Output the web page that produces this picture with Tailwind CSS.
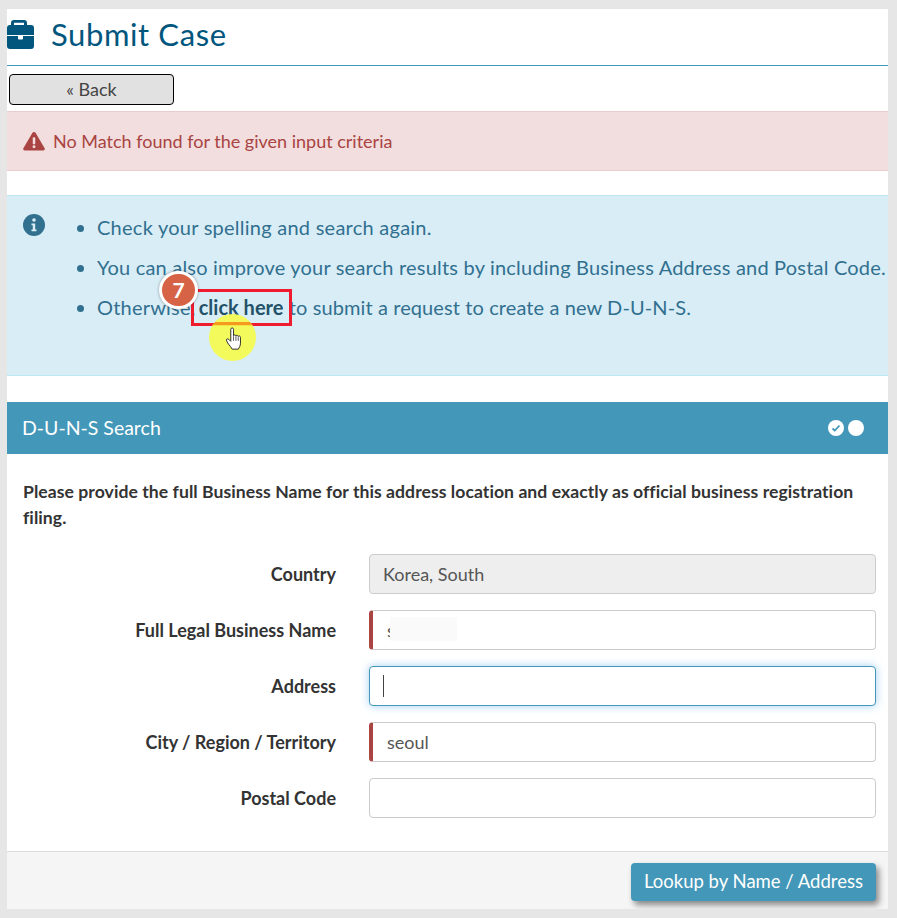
<!DOCTYPE html>
<html lang="en">
<head>
  <meta charset="UTF-8" />
  <title>Submit Case</title>
  <script src="https://cdn.jsdelivr.net/npm/@tailwindcss/browser@4"></script>
</head>
<body class="bg-[#e6e6e6] font-['Lato','Open_Sans',sans-serif] text-[#333]">
  <div class="relative ml-[7px] mr-[9px] mt-[9px] h-[900px] bg-white overflow-hidden">

    <!-- header -->
    <div class="flex items-center h-[57px] border-b border-[#4397b8]">
      <svg class="w-[27px] h-[29px] -mt-[6px]" viewBox="0 0 27 29" fill="#00567d">
        <path d="M4 5V3a3 3 0 0 1 3-3h10a3 3 0 0 1 3 3v2h4a3 3 0 0 1 3 3v7H0V8a3 3 0 0 1 3-3zM7 5h10V2.800H7z" fill-rule="evenodd"/>
        <path d="M0 16h11v2.500a1 1 0 0 0 1 1h3a1 1 0 0 0 1-1V16h11v10a3 3 0 0 1-3 3H3a3 3 0 0 1-3-3z"/>
      </svg>
      <h1 class="ml-[17px] -mt-[6px] text-[31px] text-[#00567d] tracking-[0.6px]">Submit Case</h1>
    </div>

    <!-- back -->
    <div class="pl-[2px] pt-[8px] pb-[6px]">
      <button class="block w-[165px] h-[31px] rounded-[4px] border border-black bg-[#e1e1e1] text-[18px] text-[#444]">« Back</button>
    </div>

    <!-- error -->
    <div class="flex items-center h-[60px] pl-[16px] bg-[#f2dede] border-y border-[#ebccd1] text-[#a94442] text-[18px]">
      <svg class="w-[22px] h-[20px]" viewBox="0 0 23 20"><path d="M11.500 0.500c.7 0 1.200.4 1.600 1l9.500 16a1.700 1.700 0 0 1-1.500 2.500H1.900a1.700 1.700 0 0 1-1.500-2.500l9.500-16c.4-.6.900-1 1.600-1z" fill="#a94442"/><rect x="10.200" y="6" width="2.600" height="7.500" rx="1" fill="#f2dede"/><circle cx="11.500" cy="16" r="1.500" fill="#f2dede"/></svg>
      <span class="ml-[8px]">No Match found for the given input criteria</span>
    </div>

    <!-- info -->
    <div class="flex mt-[24px] h-[181px] pl-[16px] bg-[#d9edf7] border-y border-[#bce8f1] text-[#31708f] text-[20px] tracking-[0.2px]">
      <svg class="w-[22px] h-[22px] mt-[18px] shrink-0" viewBox="0 0 22 22"><circle cx="11" cy="11" r="11" fill="#31708f"/><circle cx="11" cy="6" r="1.800" fill="#d9edf7"/><path d="M8.500 9.500h3.700v6h1.300v1.700h-5v-1.700h1.300v-4.300H8.500z" fill="#d9edf7"/></svg>
      <ul class="ml-[31px] mt-[11px] pl-[21px] list-disc leading-[40px]">
        <li class="tracking-[0.25px]">Check your spelling and search again.</li>
        <li class="whitespace-nowrap">You can also improve your search results by including Business Address and Postal Code.</li>
        <li>Otherwise, <a class="-ml-[2px] font-bold text-[#245269] tracking-normal">click here</a> <span class="tracking-[0.1px]">to submit a request to create a new D-U-N-S.</span></li>
      </ul>
    </div>

    <!-- panel heading -->
    <div class="flex items-center justify-between mt-[26px] h-[52px] pl-[15px] pr-[24px] bg-[#4397b8] text-white text-[19.5px]">
      <span>D-U-N-S Search</span>
      <span class="flex gap-[4px]">
        <span class="flex items-center justify-center w-[16px] h-[16px] rounded-full bg-white">
          <svg class="w-[10px] h-[10px]" viewBox="0 0 10 10" fill="none" stroke="#4397b8" stroke-width="1.800"><path d="M1.500 5.500l2.300 2 4.700-5"/></svg>
        </span>
        <span class="w-[16px] h-[16px] rounded-full bg-white"></span>
      </span>
    </div>

    <!-- form -->
    <p class="pl-[16px] pr-[20px] mt-[25px] text-[17.6px] tracking-[0.05px] leading-[26px] font-bold text-[#333]">Please provide the full Business Name for this address location and exactly as official business registration filing.</p>

    <div class="flex flex-col gap-[16px] mt-[23px] text-[18px]">
      <div class="flex items-center">
        <label class="w-[329px] text-right font-bold">Country</label>
        <div class="flex items-center ml-[33px] w-[507px] h-[40px] pl-[13px] rounded-[4px] border border-[#ccc] bg-[#eee] text-[#555]">Korea, South</div>
      </div>
      <div class="flex items-center">
        <label class="w-[329px] text-right font-bold">Full Legal Business Name</label>
        <div class="relative flex items-center ml-[33px] w-[507px] h-[40px] pl-[14px] rounded-[4px] border border-[#ccc] border-l-[4px] border-l-[#a94442] bg-white text-[#555]">
          s
          <span class="absolute left-[17px] top-[6px] w-[67px] h-[24px] bg-[#fafafa]"></span>
        </div>
      </div>
      <div class="flex items-center">
        <label class="w-[329px] text-right font-bold">Address</label>
        <div class="flex items-center ml-[33px] w-[507px] h-[40px] pl-[13px] rounded-[4px] border border-[#4397b8] bg-white shadow-[0_0_8px_rgba(102,175,233,0.6)]">
          <span class="w-[1px] h-[22px] bg-[#444]"></span>
        </div>
      </div>
      <div class="flex items-center">
        <label class="w-[329px] text-right font-bold">City / Region / Territory</label>
        <div class="flex items-center ml-[33px] w-[507px] h-[40px] pl-[14px] rounded-[4px] border border-[#ccc] border-l-[4px] border-l-[#a94442] bg-white text-[#555]">seoul</div>
      </div>
      <div class="flex items-center">
        <label class="w-[329px] text-right font-bold">Postal Code</label>
        <div class="ml-[33px] w-[507px] h-[40px] rounded-[4px] border border-[#ccc] bg-white"></div>
      </div>
    </div>

    <!-- footer -->
    <div class="flex justify-end mt-[33px] h-[58px] pt-[11px] pr-[12px] bg-[#f5f5f5] border-t border-[#ddd]">
      <button class="w-[245px] h-[38px] rounded-[4px] bg-[#4397b8] text-white text-[18.5px] shadow-[3px_4px_6px_rgba(0,0,0,0.45)]">Lookup by Name / Address</button>
    </div>

    <!-- tutorial annotations over the page -->
    <div class="absolute left-[184px] top-[280px] w-[101px] h-[37px] border-[3px] border-[#ee1c2e]"></div>
    <div class="absolute left-[202px] top-[305px] w-[47px] h-[47px] rounded-full bg-[#f5fb4a]/90 overflow-hidden">
      <div class="mt-[8px] h-[3px] bg-[#f59a1e]"></div>
    </div>
    <div class="absolute left-[152px] top-[262px] flex items-center justify-center w-[39px] h-[38px] rounded-full bg-[#d66345] border-[3px] border-white text-white font-bold text-[21px] shadow-[0_0_3px_rgba(0,0,0,0.4)]">7</div>
    <svg class="absolute left-[218px] top-[318px] w-[18px] h-[24px]" viewBox="0 0 19 26">
      <path d="M6 2.500c0-2 3-2 3 0v7c0-1.200 2.600-1.200 2.600.3 0-1.200 2.500-1.100 2.500.5 .3-1 2.400-.8 2.400 1v6.200c0 3-1.500 5-2.300 6.500H7.500c-1-2-2.500-3.500-4-5.500L1.500 15c-1-1.800 1-3 2.500-1.500L6 15.500z" fill="#fff" stroke="#222" stroke-width="1"/>
      <path d="M9 10v5M11.600 10v5M14.100 11v4" stroke="#222" stroke-width=".8"/>
    </svg>
  </div>
</body>
</html>
